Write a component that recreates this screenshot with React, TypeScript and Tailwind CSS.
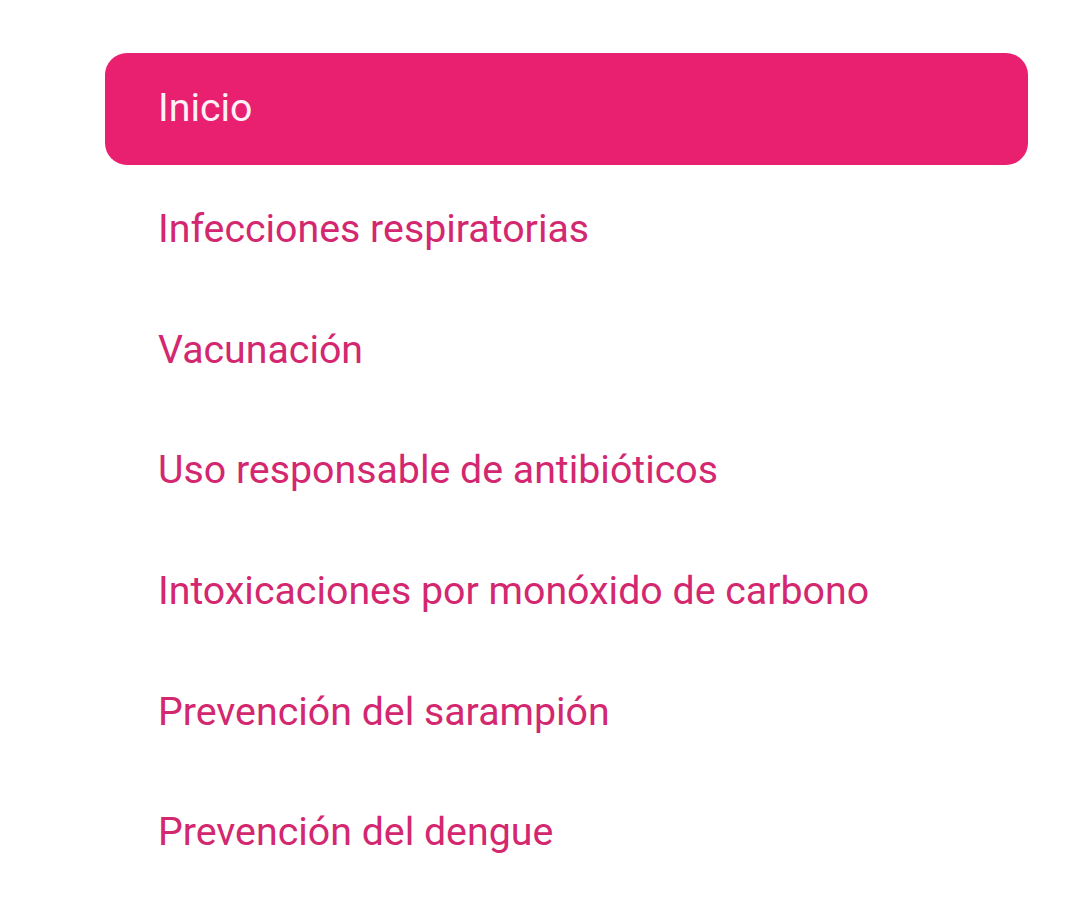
const items = [
  'Inicio',
  'Infecciones respiratorias',
  'Vacunación',
  'Uso responsable de antibióticos',
  'Intoxicaciones por monóxido de carbono',
  'Prevención del sarampión',
  'Prevención del dengue',
]

export default function App() {
  const active = 0
  return (
    <div className="min-h-[900px] w-[1080px] bg-white pt-[53px] pl-[105px] font-['Roboto',sans-serif]">
      <nav className="flex w-[923px] flex-col gap-[8.7px]">
        {items.map((label, i) => (
          <a
            key={label}
            href="#"
            className={`flex h-[112px] items-center rounded-[22px] pl-[53px] text-[39.3px] leading-none ${
              i === active ? 'bg-[#e8206f] text-[#fdf0f6]' : 'text-[#d3276f]'
            }`}
          >
            {label}
          </a>
        ))}
      </nav>
    </div>
  )
}
